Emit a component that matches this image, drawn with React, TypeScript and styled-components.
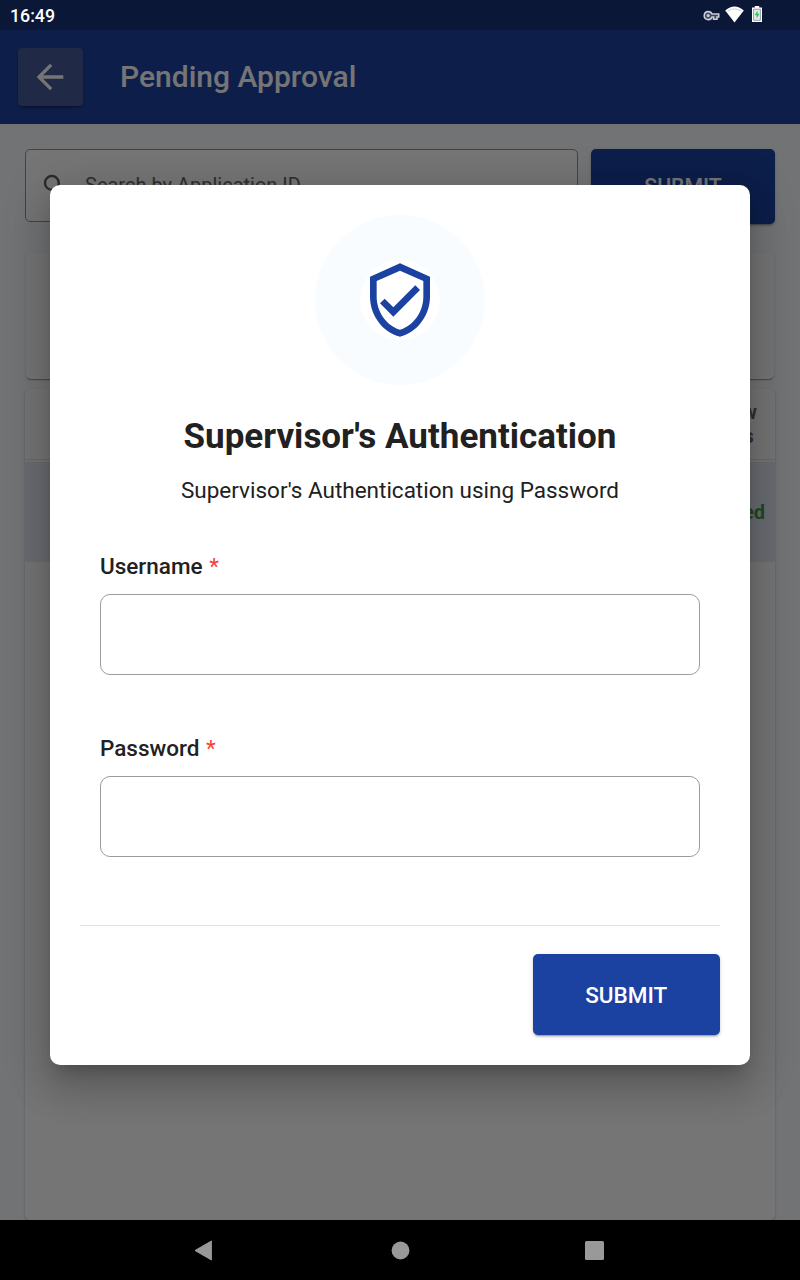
import React from "react";
import styled, { createGlobalStyle } from "styled-components";

const Global = createGlobalStyle`
  * { box-sizing: border-box; }
  body { margin: 0; font-family: Roboto, "Liberation Sans", sans-serif; }
`;

const Screen = styled.div`
  position: relative;
  width: 800px;
  height: 1280px;
  display: flex;
  flex-direction: column;
  overflow: hidden;
  background: #f9fbff;
`;

const StatusBar = styled.div`
  flex: none;
  height: 30px;
  padding: 0 36px 0 10px;
  display: flex;
  align-items: center;
  justify-content: space-between;
  background: #163278;
`;

const Clock = styled.span`
  position: relative;
  z-index: 2;
  color: #fff;
  font-size: 17.75px;
  font-weight: 500;
  line-height: 20px;
  padding-top: 2px;
`;

const StatusIcons = styled.div`
  position: relative;
  z-index: 2;
  display: flex;
  align-items: center;
  height: 30px;
  svg { display: block; }
`;

const AppBar = styled.header`
  flex: none;
  height: 94px;
  padding: 0 18px;
  display: flex;
  align-items: center;
  gap: 37px;
  background: #1f43a2;
`;

const BackButton = styled.button`
  width: 65px;
  height: 58px;
  padding: 0 1px 0 0;
  border: 0;
  border-radius: 4px;
  display: flex;
  align-items: center;
  justify-content: center;
  background: #465b9a;
  box-shadow: 0 3px 1px -2px rgba(0, 0, 0, 0.2), 0 2px 2px rgba(0, 0, 0, 0.14), 0 1px 5px rgba(0, 0, 0, 0.12);
`;

const PageTitle = styled.h1`
  margin: 0;
  color: #fff;
  font-size: 30px;
  font-weight: 500;
  line-height: 36px;
`;

const Body = styled.main`
  flex: 1;
  min-height: 0;
  padding: 25px 25px 0;
  display: flex;
  flex-direction: column;
`;

const SearchRow = styled.div`
  display: flex;
  align-items: flex-start;
  gap: 13px;
`;

const SearchField = styled.div`
  width: 553px;
  height: 73px;
  padding: 0 14px;
  display: flex;
  align-items: center;
  gap: 15px;
  border: 1px solid #8e939c;
  border-radius: 5px;
  background: #fff;
  color: #666;
  font-size: 20px;
  span { padding-bottom: 2px; }
`;

const PrimaryButton = styled.button<{ $w: number; $h: number; $size: number }>`
  width: ${(p) => p.$w}px;
  height: ${(p) => p.$h}px;
  padding: 0;
  border: 0;
  border-radius: 5px;
  background: #1c42a1;
  color: #fff;
  font-family: inherit;
  font-size: ${(p) => p.$size}px;
  font-weight: 500;
  box-shadow: 0 3px 1px -2px rgba(0, 0, 0, 0.2), 0 2px 2px rgba(0, 0, 0, 0.14), 0 1px 5px rgba(0, 0, 0, 0.12);
`;

const Card = styled.section`
  margin: 29px 1px 0;
  height: 126px;
  border-radius: 5px;
  background: #fff;
  box-shadow: 0 2px 1px -1px rgba(0, 0, 0, 0.2), 0 1px 1px rgba(0, 0, 0, 0.14), 0 1px 3px rgba(0, 0, 0, 0.12);
`;

const Table = styled.section`
  flex: 1;
  margin-top: 10px;
  border-radius: 5px;
  background: #fff;
  box-shadow: 0 1px 1px rgba(0, 0, 0, 0.14), 0 1px 3px rgba(0, 0, 0, 0.2);
`;

const TableHead = styled.div`
  height: 71px;
  padding-right: 18px;
  display: flex;
  align-items: center;
  justify-content: flex-end;
  border-bottom: 1px solid #e3e3e3;
  color: #6a6a6a;
  font-size: 20px;
  font-weight: 700;
  line-height: 24px;
  text-align: center;
`;

const TableRow = styled.div`
  margin-top: 2px;
  height: 100px;
  padding-right: 10px;
  display: flex;
  align-items: center;
  justify-content: flex-end;
  background: #e8ebf8;
  color: #43a047;
  font-size: 20px;
  font-weight: 700;
`;

const Scrim = styled.div`
  position: absolute;
  inset: 0 0 60px;
  z-index: 1;
  padding-top: 30px;
  display: flex;
  align-items: center;
  justify-content: center;
  background: rgba(0, 0, 0, 0.54);
`;

const Dialog = styled.form`
  width: 700px;
  height: 880px;
  padding: 30px;
  display: flex;
  flex-direction: column;
  align-items: center;
  border-radius: 10px;
  background: #fff;
  color: #212121;
  box-shadow: 0 11px 15px -7px rgba(0, 0, 0, 0.2), 0 24px 38px 3px rgba(0, 0, 0, 0.14), 0 9px 46px 8px rgba(0, 0, 0, 0.12);
`;

const Halo = styled.div`
  width: 170px;
  height: 170px;
  display: grid;
  place-items: center;
  border-radius: 50%;
  background: #f8fcff;
`;

const Badge = styled.div`
  width: 80px;
  height: 80px;
  border-radius: 50%;
  background: #fff;
  svg { display: block; }
`;

const DialogTitle = styled.h2`
  margin: 31px 0 0;
  font-size: 35px;
  font-weight: 700;
  line-height: 42px;
  white-space: nowrap;
`;

const Subtitle = styled.p`
  margin: 19px 0 0;
  font-size: 22.5px;
  line-height: 26px;
`;

const Field = styled.div<{ $top: number }>`
  width: 600px;
  margin-top: ${(p) => p.$top}px;
`;

const Label = styled.label`
  display: block;
  font-size: 22.5px;
  font-weight: 500;
  line-height: 26px;
  span { margin-left: 1px; color: #f44336; font-weight: 400; }
`;

const Input = styled.input`
  display: block;
  width: 600px;
  height: 81px;
  margin-top: 15px;
  padding: 0 20px;
  border: 1px solid #9b9b9b;
  border-radius: 10px;
  background: #fff;
  font: inherit;
`;

const Actions = styled.div`
  width: 640px;
  margin-top: 68px;
  padding-top: 28px;
  display: flex;
  justify-content: flex-end;
  border-top: 1px solid #e0e0e0;
`;

const NavBar = styled.nav`
  flex: none;
  height: 60px;
  background: #000;
  svg { display: block; }
`;

export default function App() {
  return (
    <Screen>
      <Global />
      <StatusBar>
        <Clock>16:49</Clock>
        <StatusIcons>
          <svg width="62" height="30" viewBox="0 0 62 30">
            <path d="M6.2 11.6a4 4 0 1 0 3.8 5.4h1.6v2.3h3.4v-2.3h1.7v-3h-6.7a4 4 0 0 0-3.8-2.4z" fill="#3c4661" stroke="#c9ccd5" strokeWidth="1.6" />
            <circle cx="6.2" cy="15.6" r="1.6" fill="#c9ccd5" />
            <path d="M23.2 10.6Q32.5 2.6 41.8 10.6L32.5 22.4z" fill="#fff" />
            <path d="M25.6 11.4Q32.5 6.2 39.4 11.4" fill="none" stroke="#aab0be" strokeWidth=".6" />
            <path d="M52.8 6h4.4v1.6h2.8v14.3H50V7.6h2.8z" fill="#fff" />
            <path d="M51.6 9.2h6.8v11.1h-6.8z" fill="#e7eaed" stroke="#7d8496" strokeWidth=".8" />
            <path d="M55.6 10.5l-3 4.8h2v3.3l3-4.8h-2z" fill="#22cf52" />
          </svg>
        </StatusIcons>
      </StatusBar>
      <AppBar>
        <BackButton type="button" aria-label="Back">
          <svg width="40" height="40" viewBox="0 0 24 24" fill="#fff">
            <path d="M20 11H7.83l5.59-5.59L12 4l-8 8 8 8 1.41-1.41L7.83 13H20v-2z" />
          </svg>
        </BackButton>
        <PageTitle>Pending Approval</PageTitle>
      </AppBar>
      <Body>
        <SearchRow>
          <SearchField>
            <svg width="30" height="30" viewBox="0 0 24 24" fill="#606060">
              <path d="M15.5 14h-.79l-.28-.27A6.47 6.47 0 0 0 16 9.5 6.5 6.5 0 1 0 9.5 16c1.61 0 3.09-.59 4.23-1.57l.27.28v.79l5 4.99L20.49 19l-4.99-5zm-6 0C7.01 14 5 11.99 5 9.5S7.01 5 9.5 5 14 7.01 14 9.5 11.99 14 9.5 14z" />
            </svg>
            <span>Search by Application ID</span>
          </SearchField>
          <PrimaryButton type="button" $w={184} $h={75} $size={21.25}>SUBMIT</PrimaryButton>
        </SearchRow>
        <Card />
        <Table>
          <TableHead>Review<br />Status</TableHead>
          <TableRow>Approved</TableRow>
        </Table>
      </Body>
      <NavBar>
        <svg width="800" height="60" viewBox="0 0 800 60" fill="#999">
          <path d="M195 30.5L211.4 21V40z" stroke="#999" strokeLinejoin="round" />
          <circle cx="400.5" cy="30.5" r="8.9" />
          <rect x="585" y="21" width="19" height="19" rx="1.5" />
        </svg>
      </NavBar>
      <Scrim>
        <Dialog>
          <Halo>
            <Badge>
              <svg width="80" height="80" viewBox="0 0 24 24" fill="#1c42a1">
                <path d="M12 1L3 5v6c0 5.55 3.84 10.74 9 12 5.16-1.26 9-6.45 9-12V5l-9-4zm7 10c0 4.52-2.98 8.69-7 9.93-4.02-1.24-7-5.41-7-9.93V6.3l7-3.11 7 3.11V11zm-11.59.59L6 13l4 4 8-8-1.41-1.42L10 14.17z" />
              </svg>
            </Badge>
          </Halo>
          <DialogTitle>Supervisor's Authentication</DialogTitle>
          <Subtitle>Supervisor's Authentication using Password</Subtitle>
          <Field $top={50}>
            <Label htmlFor="username">Username <span>*</span></Label>
            <Input id="username" />
          </Field>
          <Field $top={60}>
            <Label htmlFor="password">Password <span>*</span></Label>
            <Input id="password" type="password" />
          </Field>
          <Actions>
            <PrimaryButton type="button" $w={187.5} $h={81} $size={22.5}>SUBMIT</PrimaryButton>
          </Actions>
        </Dialog>
      </Scrim>
    </Screen>
  );
}
